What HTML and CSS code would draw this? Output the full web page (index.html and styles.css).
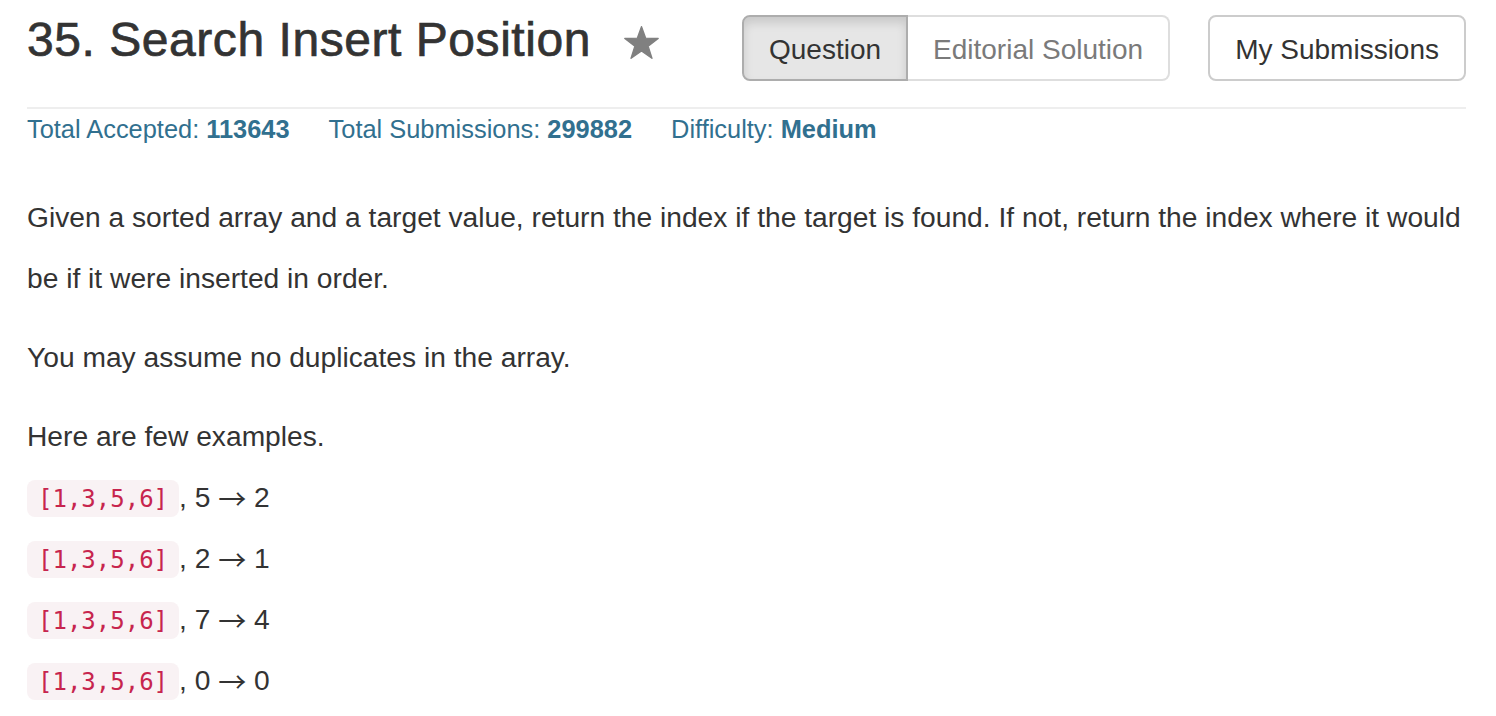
FILE: index.html
```html
<!DOCTYPE html>
<html>
<head>
<meta charset="utf-8">
<link rel="stylesheet" href="styles.css">
</head>
<body>
<div class="page">
  <div class="header">
    <div class="title-group">
      <h3 class="title">35. Search Insert Position</h3>
      <svg class="star" width="35" height="33" viewBox="0 0 100 95" aria-hidden="true">
        <polygon points="50,2 62,35 98,36 69,58 80,93 50,72 20,93 31,58 2,36 38,35" fill="#808080" stroke="#808080" stroke-width="4" stroke-linejoin="round"/>
      </svg>
    </div>
    <div class="actions">
      <div class="btn-group">
        <span class="btn active">Question</span>
        <span class="btn disabled">Editorial Solution</span>
      </div>
      <span class="btn">My Submissions</span>
    </div>
  </div>
  <div class="stats">
    <span class="stat">Total Accepted: <strong>113643</strong></span>
    <span class="stat">Total Submissions: <strong>299882</strong></span>
    <span class="stat">Difficulty: <strong>Medium</strong></span>
  </div>
  <div class="content">
    <p>Given a sorted array and a target value, return the index if the target is found. If not, return the index where it would be if it were inserted in order.</p>
    <p>You may assume no duplicates in the array.</p>
    <p>Here are few examples.<br>
<code>[1,3,5,6]</code>, 5 <span class="arrow">→</span> 2<br>
<code>[1,3,5,6]</code>, 2 <span class="arrow">→</span> 1<br>
<code>[1,3,5,6]</code>, 7 <span class="arrow">→</span> 4<br>
<code>[1,3,5,6]</code>, 0 <span class="arrow">→</span> 0</p>
  </div>
</div>
</body>
</html>
```

FILE: styles.css
```css
html, body {
  margin: 0;
  padding: 0;
  background: #ffffff;
}

body {
  font-family: "Liberation Sans", Arial, Helvetica, sans-serif;
  color: #333333;
}

.page {
  padding: 0 30px 0 27px;
}

.header {
  display: flex;
  justify-content: space-between;
  align-items: flex-start;
  height: 109px;
  box-sizing: border-box;
  padding-top: 14px;
  border-bottom: 2px solid #eeeeee;
}

.title-group {
  display: flex;
  align-items: flex-start;
}

.title {
  margin: 0;
  font-size: 48px;
  font-weight: 400;
  line-height: 52.8px;
  letter-spacing: 0.55px;
  color: #333333;
  -webkit-text-stroke: 0.7px #333333;
}

.star {
  display: block;
  margin-left: 33px;
  margin-top: 12px;
}

.actions {
  display: flex;
  align-items: flex-start;
  gap: 38px;
  margin-top: 1px;
}

.btn-group {
  display: flex;
}

.btn {
  display: inline-block;
  font-size: 28px;
  line-height: 38px;
  padding: 14px 25px 10px;
  border: 2px solid #cccccc;
  border-radius: 8px;
  background: #ffffff;
  color: #333333;
  white-space: nowrap;
}

.btn-group .btn.active {
  background: #e6e6e6;
  border-color: #adadad;
  border-radius: 8px 0 0 8px;
  box-shadow: inset 0 6px 10px rgba(0, 0, 0, 0.125);
}

.btn-group .btn.disabled {
  border-color: #dedede;
  border-left: none;
  border-radius: 0 8px 8px 0;
  color: #7a7a7a;
}

.stats {
  display: flex;
  gap: 39px;
  margin-top: 2px;
  font-size: 25.4px;
  line-height: 36px;
  color: #31708f;
}

.stats strong {
  font-weight: 700;
}

.content {
  margin-top: 40px;
  font-size: 28.2px;
  line-height: 61px;
}

.content p {
  margin: 0 0 18px;
}

.arrow {
  font-family: "Noto Sans CJK SC", "DejaVu Sans", sans-serif;
  font-size: 28px;
  line-height: 1;
  vertical-align: -3px;
}

code {
  font-family: "DejaVu Sans Mono", Menlo, monospace;
  font-size: 24px;
  line-height: 1;
  padding: 5px 11px 4px;
  color: #c7254e;
  background: #f9f2f4;
  border-radius: 8px;
}
```
